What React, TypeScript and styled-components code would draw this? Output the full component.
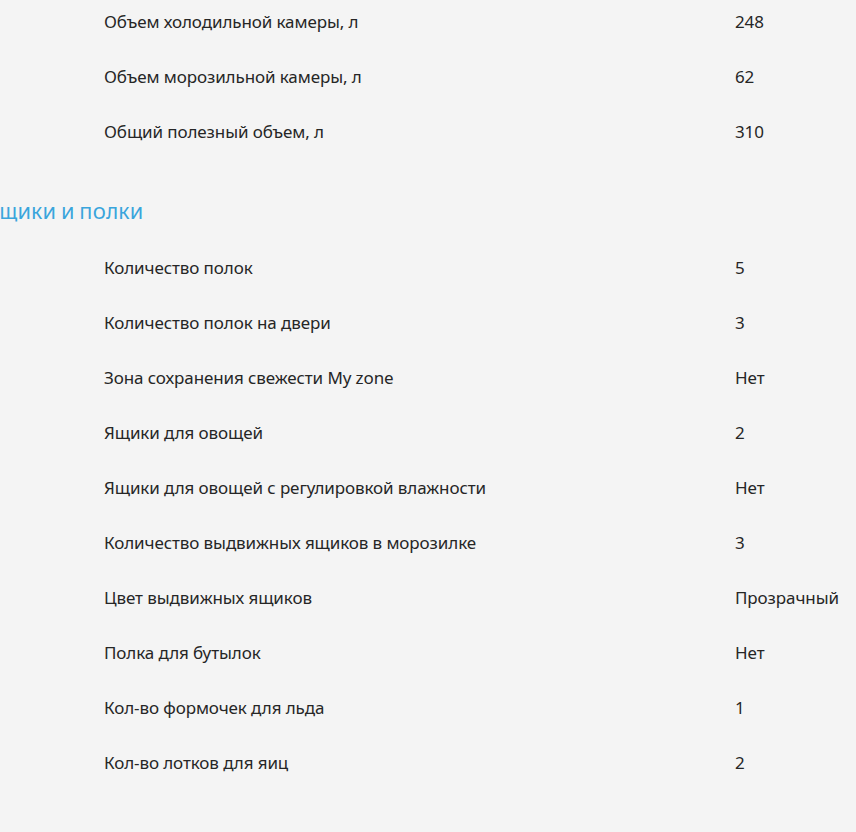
import React from "react";
import styled, { createGlobalStyle } from "styled-components";

/** ===========================================================================
 * Global styles
 * ============================================================================
 */
const GlobalStyle = createGlobalStyle`
  html, body {
    margin: 0;
    padding: 0;
    background: #f4f4f4;
  }

  body {
    font-family: "Noto Sans", "Open Sans", sans-serif;
    color: #262626;
    overflow: hidden;
  }
`;

interface Spec {
  label: string;
  value: string;
}

const VOLUME: Spec[] = [
  { label: "Объем холодильной камеры, л", value: "248" },
  { label: "Объем морозильной камеры, л", value: "62" },
  { label: "Общий полезный объем, л", value: "310" },
];

const SHELVES: Spec[] = [
  { label: "Количество полок", value: "5" },
  { label: "Количество полок на двери", value: "3" },
  { label: "Зона сохранения свежести My zone", value: "Нет" },
  { label: "Ящики для овощей", value: "2" },
  { label: "Ящики для овощей с регулировкой влажности", value: "Нет" },
  { label: "Количество выдвижных ящиков в морозилке", value: "3" },
  { label: "Цвет выдвижных ящиков", value: "Прозрачный" },
  { label: "Полка для бутылок", value: "Нет" },
  { label: "Кол-во формочек для льда", value: "1" },
  { label: "Кол-во лотков для яиц", value: "2" },
];

/** ===========================================================================
 * Layout
 * ============================================================================
 */
const Page = styled.div`
  width: 856px;
  height: 832px;
  overflow: hidden;
`;

const Content = styled.div`
  margin-top: -6px;
  display: flex;
  flex-direction: column;
`;

const Section = styled.section<{ $gap?: number }>`
  display: flex;
  flex-direction: column;
  margin-top: ${(p) => p.$gap || 0}px;
`;

const SectionTitle = styled.h3`
  margin: 0 0 0 -12px;
  height: 55px;
  display: flex;
  align-items: center;
  font-size: 17px;
  font-weight: 500;
  letter-spacing: 0.5px;
  text-transform: uppercase;
  white-space: nowrap;
  color: #3aa5dc;
`;

const Row = styled.div`
  display: grid;
  grid-template-columns: 104px 631px 1fr;
  height: 55px;
  align-items: center;
  font-size: 17px;
  line-height: 23px;
  letter-spacing: -0.1px;
  white-space: nowrap;
`;

const Label = styled.span`
  grid-column: 2;
`;

const Value = styled.span`
  grid-column: 3;
`;

/** ===========================================================================
 * SpecList
 * ============================================================================
 */
const SpecList = ({ items }: { items: Spec[] }) => (
  <>
    {items.map((item) => (
      <Row key={item.label}>
        <Label>{item.label}</Label>
        <Value>{item.value}</Value>
      </Row>
    ))}
  </>
);

export default function App() {
  return (
    <Page>
      <GlobalStyle />
      <Content>
        <Section>
          <SpecList items={VOLUME} />
        </Section>
        <Section $gap={26}>
          <SectionTitle>Ящики и полки</SectionTitle>
          <SpecList items={SHELVES} />
        </Section>
      </Content>
    </Page>
  );
}
